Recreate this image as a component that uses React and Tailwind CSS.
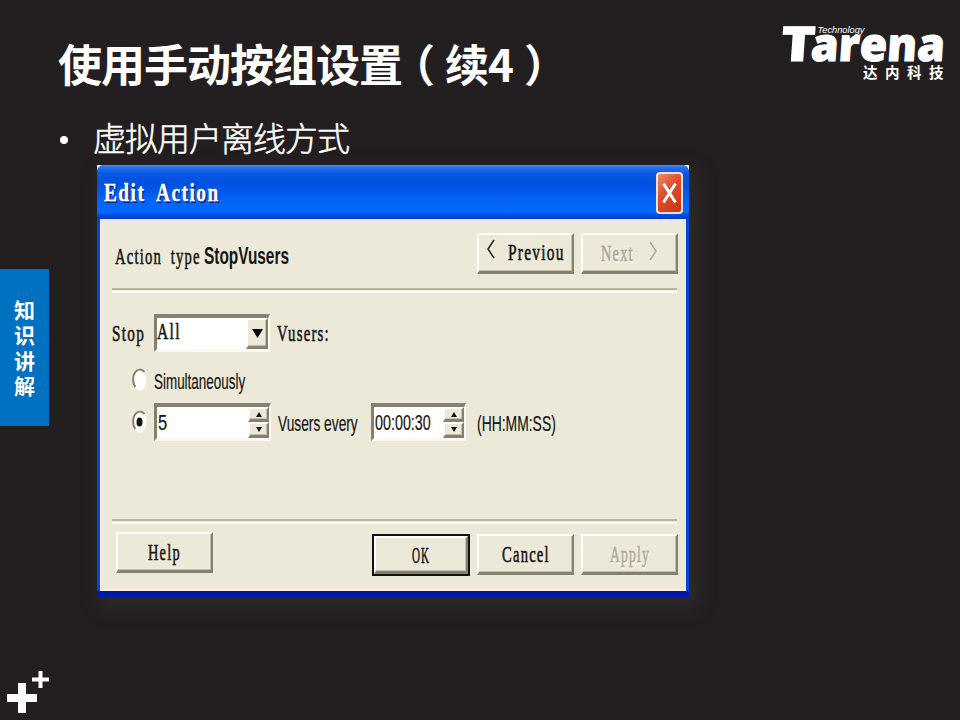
import React, { useLayoutEffect, useRef, useState } from "react";

const SERIF = "font-['Liberation_Serif',serif] text-[24px] tracking-[2px] [-webkit-text-stroke:0.6px_currentColor]";
const SANS = "font-['Liberation_Sans',sans-serif] text-[22px] [-webkit-text-stroke:0.2px_currentColor]";

/* One line of text squeezed horizontally to a fixed width. */
function Fit({ w, className = "", children }) {
  const ref = useRef(null);
  const [scale, setScale] = useState(1);
  useLayoutEffect(() => {
    const measure = () => {
      if (ref.current) setScale(w / ref.current.offsetWidth);
    };
    measure();
    document.fonts?.ready.then(measure);
  }, [w]);
  return (
    <span className={`block shrink-0 leading-6 ${className}`} style={{ width: w }}>
      <span
        ref={ref}
        className="inline-block origin-left whitespace-pre align-top"
        style={{ transform: `scaleX(${scale})` }}
      >
        {children}
      </span>
    </span>
  );
}

const RAISED =
  "border-t-2 border-l-2 border-r-2 border-b-3 border-t-white border-l-white border-r-[#85806f] border-b-[#85806f] bg-[#ece9d8] shadow-[inset_-1px_-1px_0_#c5c0ae]";
const SUNKEN =
  "border-t-4 border-l-3 border-r-2 border-b-3 border-t-[#85806f] border-l-[#85806f] border-r-[#faf9f3] border-b-[#faf9f3] bg-white";

function Button({ children, className = "" }) {
  return (
    <button className={`flex h-[41px] w-[97px] shrink-0 items-center justify-center ${RAISED} ${className}`}>
      {children}
    </button>
  );
}

function Divider() {
  return <div className="h-[5px] w-[565px] border-t-2 border-b-2 border-t-[#b8b3a2] border-b-white" />;
}

function Radio({ checked }) {
  return (
    <svg width="16" height="26" viewBox="0 0 16 26" className="shrink-0">
      <ellipse cx="8" cy="13" rx="6.500" ry="10.500" fill="#fff" />
      <path d="M3.300 20C.4 16.500.5 8.500 3.300 5.200 5.800 1.800 9.800 1.800 12.400 5" fill="none" stroke="#85806f" strokeWidth="2" />
      {checked && <ellipse cx="7.500" cy="13" rx="3" ry="4.500" fill="#111" />}
    </svg>
  );
}

function Arrows() {
  return (
    <div className="flex w-[21px] shrink-0 flex-col">
      <div className={`flex h-[15px] items-center justify-center ${RAISED}`}>
        <svg width="6" height="5"><path d="M0 5 3 0l3 5z" fill="#111" /></svg>
      </div>
      <div className={`flex h-4 items-center justify-center ${RAISED}`}>
        <svg width="6" height="5"><path d="M0 0h6L3 5z" fill="#111" /></svg>
      </div>
    </div>
  );
}

function Logo() {
  return (
    <svg width="180" height="95" viewBox="780 0 180 95" fill="#fff" className="shrink-0">
      <g fontFamily="'Open Sans', sans-serif" fontWeight="800" stroke="#fff" strokeWidth="1">
        <text transform="translate(780 60.500) skewX(-4)" fontSize="48" textLength="34" lengthAdjust="spacingAndGlyphs">T</text>
        <text transform="translate(810 60.500) skewX(-4)" fontSize="46" textLength="134" lengthAdjust="spacingAndGlyphs">arena</text>
      </g>
      <text x="817.500" y="32.500" fontFamily="'Liberation Sans', sans-serif" fontStyle="italic" fontSize="9.500" textLength="47" lengthAdjust="spacingAndGlyphs">Technology</text>
      <g fontFamily="'Noto Sans CJK SC', sans-serif" fontWeight="700" fontSize="14.500">
        <text x="863" y="77.500">达</text>
        <text x="885" y="77.500">内</text>
        <text x="907" y="77.500">科</text>
        <text x="929" y="77.500">技</text>
      </g>
    </svg>
  );
}

function EditAction() {
  return (
    <div className="h-[432px] w-[592px] bg-[linear-gradient(135deg,#fff_4px,transparent_5px),linear-gradient(225deg,#fff_4px,transparent_5px)] shadow-[6px_8px_14px_3px_#2d2a2b]">
      <div className="flex h-full flex-col overflow-hidden rounded-t-[7px] border-b-6 border-b-[#0018a8] bg-[#0046dc]">
        <div className="flex h-[54px] shrink-0 items-center justify-between bg-[linear-gradient(#3f92ff_0%,#2470ed_5%,#0757e4_16%,#0050df_35%,#0563f8_65%,#0069ff_87%,#0048d5_95%,#003ac4_100%)] pr-[6px] pl-[7px]">
          <Fit w={116} className="pt-0.5 font-['Liberation_Serif',serif] text-[25px] font-bold tracking-[2px] word-spacing-[6px] text-white [-webkit-text-stroke:0.4px_white] [text-shadow:2px_2px_0_#0a2a8c] [word-spacing:7px]">Edit Action</Fit>
          <div className="mt-0.5 flex h-[42px] w-[27px] items-center justify-center rounded-[4px] border-2 border-[#f4dfdc] bg-[linear-gradient(135deg,#ee8a6d,#dc4b28_45%,#c93510)]">
            <svg width="15" height="22" viewBox="0 0 15 22" className="shrink-0"><path d="M1.500 1.500 13.500 20.500M13.500 1.500 1.500 20.500" stroke="#fff" strokeWidth="3" /></svg>
          </div>
        </div>
        <div className="mr-[3px] ml-[3px] flex flex-1 flex-col border-b-2 border-l border-b-[#fff1cf] border-l-[#fff4d8] bg-[#ece9d8] pl-[11px] text-[#151515]">
          <div className="flex h-[69px] pt-[14px]">
            <Fit w={86} className={`ml-[3px] pt-[11px] [word-spacing:6px] ${SERIF}`}>Action type</Fit>
            <Fit w={85} className="ml-[3px] pt-[11px] font-['Liberation_Sans',sans-serif] text-[23px] font-bold">StopVusers</Fit>
            <Button className="ml-[188px]">
              <svg width="10" height="20" viewBox="0 0 10 20" className="mb-2"><path d="M8 1 2 10l6 9" fill="none" stroke="#222" strokeWidth="1.500" /></svg>
              <Fit w={57} className={`ml-3 pb-0.5 ${SERIF}`}>Previou</Fit>
            </Button>
            <Button className="ml-[7px] text-[#aca899] [text-shadow:1px_2px_0_#fff]">
              <Fit w={33} className={SERIF}>Next</Fit>
              <svg width="10" height="20" viewBox="0 0 10 20" className="mb-1 ml-3.5"><path d="m2 1 6 9-6 9" fill="none" stroke="#aca899" strokeWidth="1.500" /></svg>
            </Button>
          </div>
          <Divider />
          <div className="mt-[21px] flex h-[38px] items-center">
            <Fit w={33} className={SERIF}>Stop</Fit>
            <div className={`ml-[9px] flex h-[38px] w-[116px] justify-between ${SUNKEN}`}>
              <Fit w={24} className={`pt-px ${SERIF}`}>All</Fit>
              <div className={`flex w-[22px] items-center justify-center ${RAISED}`}>
                <svg width="11" height="9"><path d="M0 0h11L5.500 9z" fill="#000" /></svg>
              </div>
            </div>
            <Fit w={53} className={`ml-[7px] ${SERIF}`}>Vusers:</Fit>
          </div>
          <div className="mt-[14px] ml-[20px] flex h-[27px] items-center">
            <Radio />
            <Fit w={91} className={`ml-[6px] pt-1 ${SANS}`}>Simultaneously</Fit>
          </div>
          <div className="mt-[10px] ml-[20px] flex h-[38px] items-center">
            <Radio checked />
            <div className={`ml-[6px] flex h-[38px] w-[117px] justify-between ${SUNKEN}`}>
              <Fit w={9} className={`ml-px pt-[4px] ${SANS}`}>5</Fit>
              <Arrows />
            </div>
            <Fit w={80} className={`ml-[7px] pt-[3px] ${SANS}`}>Vusers every</Fit>
            <div className={`ml-[13px] flex h-[38px] w-[95px] justify-between ${SUNKEN}`}>
              <Fit w={56} className={`ml-px pt-[4px] ${SANS}`}>00:00:30</Fit>
              <Arrows />
            </div>
            <Fit w={79} className={`ml-[11px] pt-[3px] ${SANS}`}>(HH:MM:SS)</Fit>
          </div>
          <div className="mt-[78px]"><Divider /></div>
          <div className="flex pt-2">
            <Button className="ml-[4px]"><Fit w={33} className={SERIF}>Help</Fit></Button>
            <div className="mt-0.5 ml-[159px] h-[42px] w-[98px] border-2 border-[#111]">
              <div className={`flex h-full items-center justify-center ${RAISED}`}>
                <Fit w={18} className={SERIF}>OK</Fit>
              </div>
            </div>
            <Button className="mt-0.5 ml-[7px]"><Fit w={48} className={SERIF}>Cancel</Fit></Button>
            <Button className="mt-0.5 ml-[7px] text-[#aca899] [text-shadow:1px_2px_0_#fff]"><Fit w={40} className={SERIF}>Apply</Fit></Button>
          </div>
        </div>
      </div>
    </div>
  );
}

export default function App() {
  return (
    <div className="flex h-[720px] w-[960px] flex-col overflow-hidden bg-[#231f20] font-['Noto_Sans_CJK_SC',sans-serif] text-white">
      <header className="flex h-[115px] shrink-0 justify-between">
        <h1 className="mt-[33px] ml-[58px] text-[44px] leading-[60px] font-bold tracking-[-1px] whitespace-nowrap">使用手动按组设置<span className="-ml-[11px] mr-[11px]">（</span>续4<span className="ml-[11px]">）</span></h1>
        <Logo />
      </header>
      <div className="flex flex-1">
        <aside className="flex w-[49px] shrink-0 flex-col justify-between">
          <div className="mt-[154px] flex h-[157px] flex-col items-center justify-center bg-[#0070c0] text-[21px] leading-[25.500px] font-bold">
            <span>知</span><span>识</span><span>讲</span><span>解</span>
          </div>
          <svg width="50" height="50" viewBox="0 670 50 50" fill="#fff">
            <path d="M18 683h8v11h11v8H26v11h-8v-11H7v-8h11zM38.500 671h4v6.500H49v4h-6.500V688h-4v-6.500H32v-4h6.500z" />
          </svg>
        </aside>
        <main className="ml-[10px]">
          <div className="flex h-[50px] items-center text-[33px] font-light tracking-[-1px]">
            <span className="mr-[25px] ml-px size-2 rounded-full bg-white" />
            <span className="mb-[6px] leading-[43px] [-webkit-text-stroke:0.5px_white]">虚拟用户离线方式</span>
          </div>
          <div className="ml-[38px]"><EditAction /></div>
        </main>
      </div>
    </div>
  );
}
